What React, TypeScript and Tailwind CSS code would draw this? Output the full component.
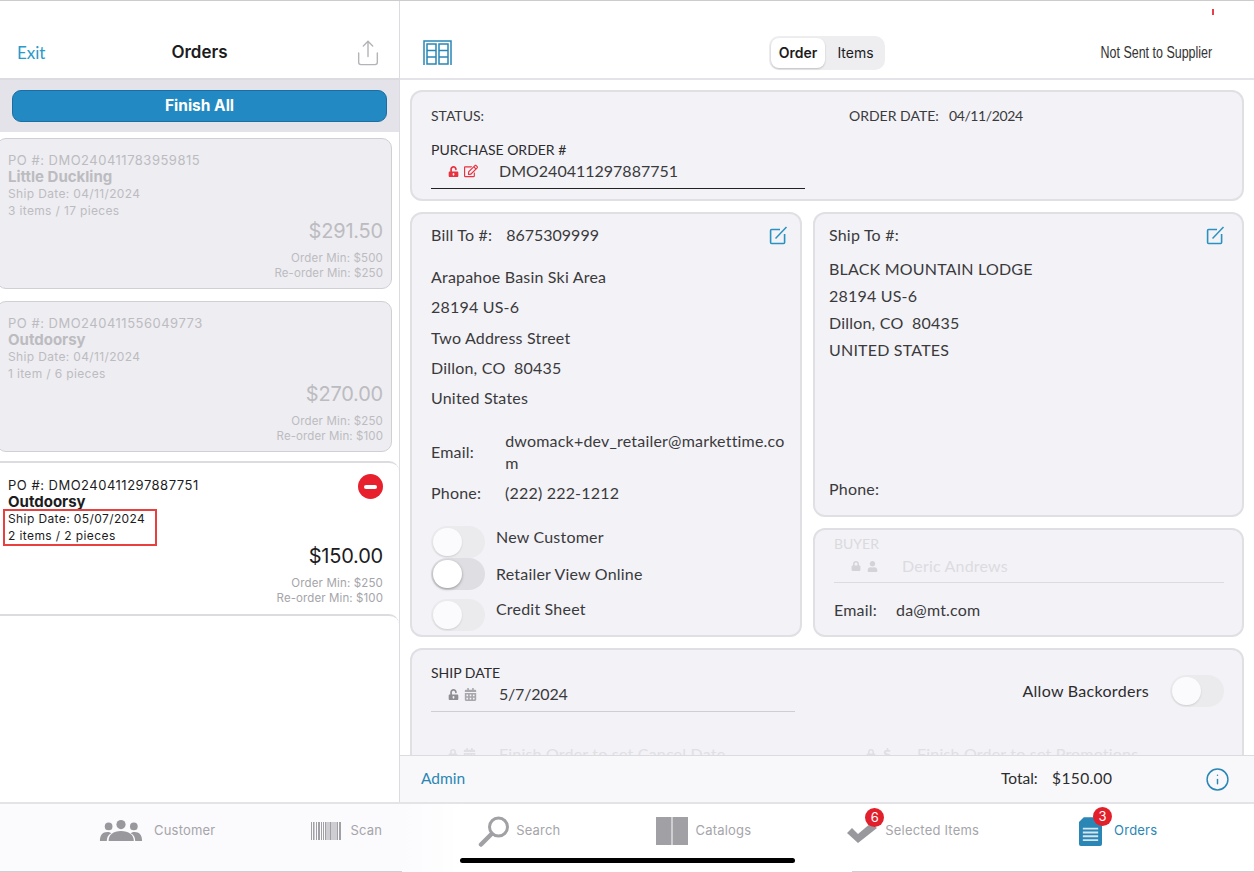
import { Share, Info } from "lucide-react";
import { FaUnlockAlt, FaRegEdit, FaLock, FaUser, FaCalendarAlt, FaDollarSign } from "react-icons/fa";

const EditIcon = () => (
  <svg width="19" height="19" viewBox="0 0 19 19" fill="none" stroke="#2a92bf" strokeWidth="1.6">
    <path d="M11 3.5H2.6a1 1 0 0 0-1 1v12a1 1 0 0 0 1 1h12a1 1 0 0 0 1-1V8" />
    <path d="M6.5 12.5 17.5 1" strokeWidth="1.5" />
  </svg>
);

const OrderCard = ({
  po,
  name,
  ship,
  count,
  price,
  min,
  reorder,
}: {
  po: string;
  name: string;
  ship: string;
  count: string;
  price: string;
  min: string;
  reorder: string;
}) => (
  <div className="-ml-[4px] w-[396px] h-[151px] mb-[12px] pl-[11px] pr-[8px] pt-[13px] bg-[#eeedf2] border border-[#d0d0d4] rounded-[10px] text-[#bcbcc0]">
    <div className="h-[17px] leading-[17px] text-[13px] tracking-[0.5px]">{po}</div>
    <div className="-mt-[1px] h-[17px] leading-[17px] text-[15px] font-bold">{name}</div>
    <div className="h-[17px] leading-[17px] text-[12px] tracking-[0.35px]">{ship}</div>
    <div className="h-[17px] leading-[17px] text-[12px] tracking-[0.35px]">{count}</div>
    <div className="text-right text-[20px] leading-[24px] tracking-[-0.2px]">{price}</div>
    <div className="mt-[8px] text-right text-[11.5px] leading-[15px] tracking-[0.15px]">{min}</div>
    <div className="text-right text-[11.5px] leading-[15px] tracking-[0.1px]">{reorder}</div>
  </div>
);

const Toggle = ({ strong }: { strong?: boolean }) => (
  <div className={`w-[54px] h-[32px] rounded-full p-[2px] ${strong ? "bg-[#dfdfe3]" : "bg-[#ebebee]"}`}>
    <div className={`w-[29px] h-[28px] rounded-full ${strong ? "bg-white shadow-[0_1px_3px_rgba(0,0,0,0.35)]" : "bg-[#fbfafc] shadow-[0_1px_2px_rgba(0,0,0,0.12)]"}`} />
  </div>
);

const Tab = ({ icon, label, active }: { icon: React.ReactNode; label: string; active?: boolean }) => (
  <div className={`flex items-center text-[13px] tracking-[0.2px] ${active ? "text-[#2a86b5]" : "text-[#a5a5aa]"}`}>
    {icon}
    <span>{label}</span>
  </div>
);

const panel = "bg-[#f3f2f7] border-2 border-[#e0e0e4] rounded-[12px]";

export default function App() {
  return (
    <div className="relative w-[1254px] h-[872px] overflow-hidden flex flex-col bg-white border-t border-[#cccccc] font-['Inter',sans-serif] text-[#1c1c1e]">
      <div className="flex flex-1 min-h-0">
        {/* Left list */}
        <div className="w-[400px] shrink-0 flex flex-col border-r border-[#dcdce0]">
          <div className="h-[79px] shrink-0 pt-[26px] pl-[17px] pr-[17px] flex items-center justify-between border-b-2 border-[#dcdce0]">
            <span className="text-[#2a9bc9] text-[17px] font-['Lato',sans-serif] w-[60px]">Exit</span>
            <span className="text-[17px] font-semibold">Orders</span>
            <div className="w-[60px] flex justify-end">
              <Share size={28} strokeWidth={1.2} className="text-[#b4b4b8]" />
            </div>
          </div>
          <div className="h-[52px] shrink-0 bg-[#e4e3e9] pl-[12px] pr-[12px] pt-[10px]">
            <div className="h-[32px] rounded-[9px] bg-[#2289c2] border border-[#1b6ea3] text-white text-[15.5px] font-bold flex items-center justify-center">
              Finish All
            </div>
          </div>
          <div className="relative flex-1 pt-[6px] overflow-hidden">
            <OrderCard
              po="PO #: DMO240411783959815"
              name="Little Duckling"
              ship="Ship Date: 04/11/2024"
              count="3 items / 17 pieces"
              price="$291.50"
              min="Order Min: $500"
              reorder="Re-order Min: $250"
            />
            <OrderCard
              po="PO #: DMO240411556049773"
              name="Outdoorsy"
              ship="Ship Date: 04/11/2024"
              count="1 item / 6 pieces"
              price="$270.00"
              min="Order Min: $250"
              reorder="Re-order Min: $100"
            />
            <div className="-mt-[3px] -ml-[4px] h-[153px] pl-[12px] pr-[16px] pt-[14px] bg-white border-t-2 border-[#dcdce0] rounded-tr-[10px]">
              <div className="flex justify-between">
                <div>
                  <div className="h-[17px] leading-[17px] text-[13px] tracking-[0.5px]">PO #: DMO240411297887751</div>
                  <div className="-mt-[1px] h-[17px] leading-[17px] text-[15px] font-bold">Outdoorsy</div>
                  <div className="h-[17px] leading-[17px] text-[12px] tracking-[0.4px]">Ship Date: 05/07/2024</div>
                  <div className="h-[17px] leading-[17px] text-[12px] tracking-[0.4px]">2 items / 2 pieces</div>
                </div>
                <div className="-mt-[3px] w-[25px] h-[25px] rounded-full bg-[#e8202e] flex items-center justify-center">
                  <div className="w-[13px] h-[4px] rounded-full bg-white" />
                </div>
              </div>
              <div className="text-right text-[20px] leading-[24px] tracking-[-0.2px]">$150.00</div>
              <div className="mt-[8px] text-right text-[11.5px] leading-[15px] tracking-[0.15px] text-[#a5a5aa]">Order Min: $250</div>
              <div className="text-right text-[11.5px] leading-[15px] tracking-[0.1px] text-[#a5a5aa]">Re-order Min: $100</div>
            </div>
            <div className="-ml-[4px] h-[20px] border-t-2 border-[#dcdce0] rounded-tr-[10px]" />
            {/* annotation box */}
            <div className="absolute left-[3px] top-[377px] w-[154px] h-[37px] border-2 border-[#e8403f]" />
          </div>
        </div>

        {/* Right detail */}
        <div className="flex-1 min-w-0 flex flex-col font-['Lato',sans-serif]">
          <div className="relative h-[79px] shrink-0 pt-[26px] pl-[23px] pr-[42px] flex items-center border-b-2 border-[#e4e4e8]">
            <svg width="29" height="25" viewBox="0 0 29 25" fill="none" stroke="#2a86b5" strokeWidth="1.5">
              <path d="M1 25V1h27v24" />
              <path d="M4 4h9v20H4zM16 4h9v20h-9zM4 10.5h9M4 17h9M16 10.5h9M16 17h9" />
            </svg>
            <div className="ml-[317px] flex w-[116px] h-[34px] p-[2px] rounded-[10px] bg-[#eeeef0] text-[14px] font-['Inter',sans-serif]">
              <div className="w-[54px] h-[30px] rounded-[8px] bg-white shadow-[0_1px_2px_rgba(0,0,0,0.2)] flex items-center justify-center font-semibold">Order</div>
              <div className="flex-1 pl-[3px] flex items-center justify-center">Items</div>
            </div>
            <span className="ml-auto whitespace-nowrap text-[16px] text-[#333] font-['Liberation_Sans',sans-serif] scale-x-[0.78] origin-right">Not Sent to Supplier</span>
            <div className="absolute right-[40px] top-[8px] w-[2px] h-[6px] bg-[#e8404a]" />
          </div>

          <div className="flex-1 min-h-0 overflow-hidden px-[10px] pt-[10px] flex flex-col gap-[11px] text-[16px] tracking-[0.2px] text-[#3a3a3c]">
            {/* Status */}
            <div className={`${panel} h-[111px] shrink-0 pl-[19px] pt-[13px]`}>
              <div className="flex text-[14px] tracking-normal h-[20px] items-center whitespace-nowrap">
                <span className="w-[418px]">STATUS:</span>
                <span className="w-[100px]">ORDER DATE:</span>
                <span className="tracking-[-0.4px]">04/11/2024</span>
              </div>
              <div className="mt-[16px] text-[14px] tracking-normal leading-[18px] text-[#2c2c2e]">PURCHASE ORDER #</div>
              <div className="w-[374px] h-[30px] border-b border-[#222] flex items-center pl-[17px] pb-[5px] text-[#e8323f]">
                <FaUnlockAlt size={11} />
                <FaRegEdit size={14} className="ml-[5px]" />
                <span className="ml-[21px] text-[16px] tracking-normal text-[#3a3a3c]">DMO240411297887751</span>
              </div>
            </div>

            <div className="flex gap-[11px] shrink-0 h-[425px]">
              {/* Bill to */}
              <div className={`${panel} w-[392px] pl-[19px] pr-[12px] pt-[10px]`}>
                <div className="flex justify-between items-center h-[22px]">
                  <span>Bill To #:<span className="ml-[14px] tracking-normal">8675309999</span></span>
                  <EditIcon />
                </div>
                <div className="mt-[16px] leading-[30.3px] whitespace-pre">
                  <div>Arapahoe Basin Ski Area</div>
                  <div>28194 US-6</div>
                  <div>Two Address Street</div>
                  <div>Dillon, CO  80435</div>
                  <div>United States</div>
                </div>
                <div className="mt-[17px] flex">
                  <span className="w-[75px] pt-[10px]">Email:</span>
                  <span className="w-[286px] leading-[22px] break-all">dwomack+dev_retailer@markettime.com</span>
                </div>
                <div className="mt-[7px] flex">
                  <span className="w-[74px]">Phone:</span>
                  <span>(222) 222-1212</span>
                </div>
                <div className="mt-[21px] flex items-center gap-[11px] h-[32px]">
                  <Toggle />
                  <span className="-mt-[10px]">New Customer</span>
                </div>
                <div className="flex items-center gap-[11px] h-[32px]">
                  <Toggle strong />
                  <span>Retailer View Online</span>
                </div>
                <div className="mt-[9px] flex items-center gap-[11px] h-[32px]">
                  <Toggle />
                  <span className="-mt-[12px]">Credit Sheet</span>
                </div>
              </div>

              <div className="flex-1 min-w-0 flex flex-col gap-[11px]">
                {/* Ship to */}
                <div className={`${panel} h-[305px] shrink-0 pl-[14px] pr-[17px] pt-[10px] flex flex-col`}>
                  <div className="flex justify-between items-center h-[22px]">
                    <span>Ship To #:</span>
                    <EditIcon />
                  </div>
                  <div className="mt-[9px] leading-[27px] whitespace-pre">
                    <div>BLACK MOUNTAIN LODGE</div>
                    <div>28194 US-6</div>
                    <div>Dillon, CO  80435</div>
                    <div>UNITED STATES</div>
                  </div>
                  <div className="mt-[114px]">Phone:</div>
                </div>
                {/* Buyer */}
                <div className={`${panel} flex-1 pl-[19px] pr-[18px] pt-[5px]`}>
                  <div className="text-[14px] tracking-normal leading-[18px] text-[#dadadd]">BUYER</div>
                  <div className="h-[30px] border-b border-[#dcdce0] flex items-center pl-[17px] pb-[3px] text-[#d4d4d8]">
                    <FaLock size={10} />
                    <FaUser size={11} className="ml-[6px]" />
                    <span className="ml-[24px] text-[16px] text-[#dcdce0]">Deric Andrews</span>
                  </div>
                  <div className="mt-[15px] flex">
                    <span className="w-[62px]">Email:</span>
                    <span>da@mt.com</span>
                  </div>
                </div>
              </div>
            </div>

            {/* Ship date */}
            <div className={`${panel} shrink-0 h-[160px] pl-[19px] pr-[18px] pt-[14px]`}>
              <div className="flex justify-between">
                <div className="w-[364px]">
                  <div className="text-[14px] tracking-normal leading-[18px] text-[#2c2c2e]">SHIP DATE</div>
                  <div className="h-[30px] border-b border-[#cfcfd3] flex items-center pl-[17px] pb-[5px] text-[#8e8e93]">
                    <FaUnlockAlt size={11} />
                    <FaCalendarAlt size={13} className="ml-[5px] text-[#a8a8ac]" />
                    <span className="ml-[22px] text-[16px] tracking-[-0.2px] text-[#3a3a3c]">5/7/2024</span>
                  </div>
                </div>
                <div className="flex items-center gap-[21px] h-[32px] mt-[11px]">
                  <span className="text-[#2c2c2e] text-[16px] tracking-[0.3px]">Allow Backorders</span>
                  <Toggle />
                </div>
              </div>
              <div className="mt-[30px] flex text-[#e0e0e3]">
                <div className="w-[435px] flex items-center pl-[17px]">
                  <FaLock size={10} />
                  <FaCalendarAlt size={13} className="ml-[5px]" />
                  <span className="ml-[23px] text-[16px]">Finish Order to set Cancel Date</span>
                </div>
                <div className="flex items-center">
                  <FaLock size={10} />
                  <FaDollarSign size={13} className="ml-[5px]" />
                  <span className="ml-[23px] text-[16px]">Finish Order to set Promotions</span>
                </div>
              </div>
            </div>
          </div>

          <div className="h-[47px] shrink-0 bg-[#f8f8fa] border-t border-[#dcdce0] flex items-center pl-[21px] pr-[24px] text-[15.5px]">
            <span className="text-[#2a86b5] w-[580px]">Admin</span>
            <span className="w-[51px] text-[#2c2c2e]">Total:</span>
            <span className="text-[#2c2c2e] tracking-[0.4px]">$150.00</span>
            <Info size={25} strokeWidth={1.4} className="ml-auto text-[#2a86b5]" />
          </div>
        </div>
      </div>

      {/* Tab bar */}
      <div className="relative h-[70px] shrink-0 border-t-2 border-[#e4e4e8] bg-[linear-gradient(90deg,#fbfafd_0,#fbfafd_400px,#ffffff_460px)] pl-[98px] pb-[14px] flex gap-[96px] items-center">
        <Tab
          label="Customer"
          icon={
            <svg width="46" height="22" viewBox="0 0 46 24" fill="#98989d" className="mr-[10px]">
              <circle cx="9.5" cy="7" r="4.2" />
              <circle cx="23" cy="5" r="5" />
              <circle cx="37" cy="7" r="4.2" />
              <path d="M0 23c0-7 3-10 8-10 2 0 3 .5 4.5 1.500C9 16 7.500 19 7.500 23zM38.500 23c0-4-1.500-7-5-8.500 1.500-1 2.500-1.500 4.500-1.500 5 0 8 3 8 10zM9.500 23c0-7 5-11 13.500-11s14 4 14 11z" />
            </svg>
          }
        />
        <Tab
          label="Scan"
          icon={
            <svg width="30" height="18" viewBox="0 0 30 18" fill="#a0a0a5" className="mr-[9px]">
              <path d="M0 0h1v18H0zM2 0h1.500v18H2zM5 0h1v18H5zM7 0h2v18H7zM10 0h1v18h-1zM12 0h1v18h-1zM14 0h1.500v18H14zM16.500 0h1v18h-1zM18.500 0h2v18h-2zM21.500 0h1v18h-1zM23.500 0h1v18h-1zM25.500 0h1.500v18h-1.500zM28 0h2v18h-2z" />
            </svg>
          }
        />
        <Tab
          label="Search"
          icon={
            <svg width="32" height="31" viewBox="0 0 32 31" fill="none" stroke="#a0a0a5" className="mr-[6px]">
              <circle cx="20.500" cy="11" r="9" strokeWidth="3" />
              <path d="M13.500 18 3 28.500" strokeWidth="4.500" strokeLinecap="round" />
            </svg>
          }
        />
        <Tab
          label="Catalogs"
          icon={
            <svg width="32" height="28" viewBox="0 0 32 28" fill="#a0a0a5" className="mr-[7px]">
              <rect x="0" y="0" width="15.500" height="28" />
              <rect x="16.500" y="0" width="15.500" height="28" />
            </svg>
          }
        />
        <div className="relative">
          <Tab
            label="Selected Items"
            icon={
              <svg width="30" height="20" viewBox="0 0 30 20" fill="#98989d" className="mr-[8px] mt-[3px]">
                <path d="M0 10 5 5l6 6L24 0l6 5-19 15z" />
              </svg>
            }
          />
          <span className="absolute left-[18px] -top-[12px] w-[19px] h-[19px] rounded-full bg-[#e2202c] text-white text-[13px] leading-[19px] text-center">6</span>
        </div>
        <div className="relative ml-[4px]">
          <Tab
            active
            label="Orders"
            icon={
              <svg width="23" height="31" viewBox="0 0 24 30" fill="#2a86b5" className="mr-[12px]">
                <path d="M5 0h17a2 2 0 0 1 2 2v26a2 2 0 0 1-2 2H2a2 2 0 0 1-2-2V5z" />
                <path d="M4 11h16v2H4zM4 15h16v2H4zM4 19h16v2H4zM4 23h16v2H4z" fill="#d4e6f1" />
              </svg>
            }
          />
          <span className="absolute left-[14px] -top-[9px] w-[19px] h-[19px] rounded-full bg-[#e2202c] text-white text-[13px] leading-[19px] text-center">3</span>
        </div>
        {/* home indicator */}
        <div className="absolute left-[460px] top-[54px] w-[335px] h-[5px] rounded-full bg-black" />
        <div className="absolute left-0 bottom-0 w-[402px] h-[1px] bg-[#cfcfd3]" />
        <div className="absolute left-[852px] right-0 bottom-0 h-[1px] bg-[#cfcfd3]" />
      </div>
    </div>
  );
}
